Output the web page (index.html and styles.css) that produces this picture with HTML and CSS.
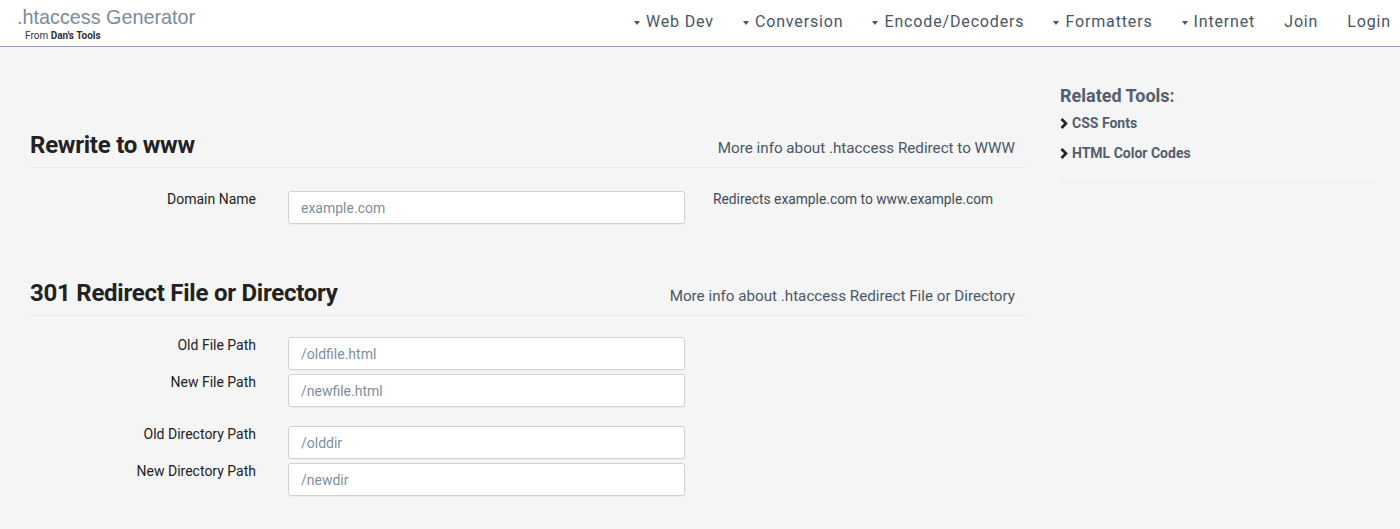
FILE: index.html
```html
<!DOCTYPE html>
<html lang="en">
<head>
<meta charset="utf-8">
<title>.htaccess Generator</title>
<link rel="stylesheet" href="styles.css">
</head>
<body>
<header class="topbar">
  <div class="brand">
    <div class="brand-title">.htaccess Generator</div>
    <div class="brand-sub">From <b>Dan's Tools</b></div>
  </div>
  <nav class="nav">
    <a class="nav-item drop">Web Dev</a>
    <a class="nav-item drop">Conversion</a>
    <a class="nav-item drop">Encode/Decoders</a>
    <a class="nav-item drop">Formatters</a>
    <a class="nav-item drop">Internet</a>
    <a class="nav-item">Join</a>
    <a class="nav-item">Login</a>
  </nav>
</header>

<div class="page">
  <main class="main">
    <section class="section">
      <div class="section-head">
        <h2 class="section-title">Rewrite to www</h2>
        <a class="more">More info about .htaccess Redirect to WWW</a>
      </div>
      <div class="row">
        <label class="label">Domain Name</label>
        <input class="field" type="text" placeholder="example.com">
        <div class="help">Redirects example.com to www.example.com</div>
      </div>
    </section>

    <section class="section second">
      <div class="section-head">
        <h2 class="section-title">301 Redirect File or Directory</h2>
        <a class="more">More info about .htaccess Redirect File or Directory</a>
      </div>
      <div class="group">
        <div class="row">
          <label class="label">Old File Path</label>
          <input class="field" type="text" placeholder="/oldfile.html">
        </div>
        <div class="row">
          <label class="label">New File Path</label>
          <input class="field" type="text" placeholder="/newfile.html">
        </div>
      </div>
      <div class="group">
        <div class="row">
          <label class="label">Old Directory Path</label>
          <input class="field" type="text" placeholder="/olddir">
        </div>
        <div class="row">
          <label class="label">New Directory Path</label>
          <input class="field" type="text" placeholder="/newdir">
        </div>
      </div>
    </section>
  </main>

  <aside class="sidebar">
    <h3 class="side-title">Related Tools:</h3>
    <ul class="side-list">
      <li><span class="chev"><svg width="8" height="11" viewBox="0 0 8 11"><path d="M1.5 1 L6 5.5 L1.5 10" fill="none" stroke="#1f2328" stroke-width="2.6"/></svg></span><a>CSS Fonts</a></li>
      <li><span class="chev"><svg width="8" height="11" viewBox="0 0 8 11"><path d="M1.5 1 L6 5.5 L1.5 10" fill="none" stroke="#1f2328" stroke-width="2.6"/></svg></span><a>HTML Color Codes</a></li>
    </ul>
  </aside>
</div>
</body>
</html>
```

FILE: styles.css
```css
* { box-sizing: border-box; }

html, body {
  margin: 0;
  padding: 0;
}

body {
  background: #f5f5f5;
  font-family: Roboto, "Liberation Sans", Arial, sans-serif;
  color: #222;
  height: 529px;
  overflow: hidden;
}

a { text-decoration: none; color: inherit; cursor: pointer; }

.topbar {
  height: 47px;
  background: #fff;
  border-bottom: 1px solid #8ea3bb;
  display: flex;
  justify-content: space-between;
  align-items: flex-start;
}

.brand {
  padding: 6px 0 0 17px;
}

.brand-title {
  font-family: "Liberation Sans", Arial, sans-serif;
  font-size: 19.8px;
  line-height: 22px;
  color: #7a8b9d;
}

.brand-sub {
  font-family: Roboto, sans-serif;
  font-size: 10px;
  line-height: 12px;
  color: #333;
  padding-left: 8px;
  margin-top: 2px;
}

.brand-sub b { font-weight: 700; }

.nav {
  display: flex;
  gap: 29px;
  padding: 12px 9px 0 0;
}

.nav-item {
  font-size: 16px;
  line-height: 20px;
  letter-spacing: 0.85px;
  color: #4a5564;
  display: flex;
  align-items: center;
}

.nav-item.drop::before {
  content: "";
  width: 0;
  height: 0;
  border-left: 3px solid transparent;
  border-right: 3px solid transparent;
  border-top: 4px solid #4a5564;
  margin-right: 6px;
  margin-top: 2px;
}

.page {
  display: grid;
  grid-template-columns: 995px 316px;
  column-gap: 35px;
  padding-left: 30px;
}

.main {
  padding-top: 84px;
}

.section-head {
  display: flex;
  justify-content: space-between;
  align-items: baseline;
  border-bottom: 1px solid #e6e9ed;
  padding-bottom: 8px;
}

.section-title {
  margin: 0;
  font-size: 24px;
  line-height: 28px;
  font-weight: 700;
  letter-spacing: -0.25px;
  color: #222;
}

.more {
  font-size: 15.2px;
  color: #4a5564;
  padding-right: 10px;
}

.section.second {
  margin-top: 55px;
}

.row {
  display: grid;
  grid-template-columns: 230px 397px 1fr;
  column-gap: 28px;
  align-items: start;
}

.section > .row { margin-top: 23px; }

.group { margin-top: 21px; display: flex; flex-direction: column; gap: 4px; }
.group + .group { margin-top: 19px; }

.label {
  text-align: right;
  font-size: 14px;
  line-height: 17px;
  color: #222;
  padding-right: 4px;
}

.field {
  margin: 0;
  width: 397px;
  height: 33px;
  border: 1px solid #cfd3d8;
  border-radius: 3px;
  background: #fff;
  padding: 0 12px;
  font-family: Roboto, sans-serif;
  font-size: 14px;
  color: #333;
  outline: none;
  box-shadow: 0 1px 1px rgba(0,0,0,0.04);
}

.field::placeholder { color: #7f8e9e; }

.help {
  font-size: 13.8px;
  line-height: 17px;
  color: #3f4a57;
}

.sidebar {
  padding-top: 37px;
}

.side-title {
  margin: 0;
  font-size: 18px;
  line-height: 24px;
  font-weight: 700;
  color: #525e6d;
}

.side-list {
  list-style: none;
  margin: 0;
  padding: 5px 0 19px;
  border-bottom: 1px solid #e9edf1;
  display: flex;
  flex-direction: column;
  gap: 10px;
}

.side-list li {
  display: flex;
  align-items: center;
  font-size: 14px;
  line-height: 20px;
  font-weight: 700;
  color: #525e6d;
}

.chev {
  display: inline-flex;
  width: 12px;
}
```
